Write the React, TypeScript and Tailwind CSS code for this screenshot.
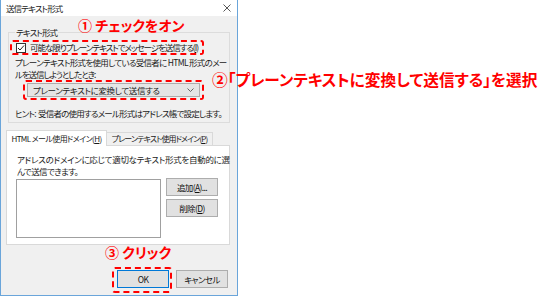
import React from "react"

const jp = "font-['Noto_Sans_CJK_JP',sans-serif] [font-feature-settings:'palt']"

function Btn({ children, primary }: { children: React.ReactNode; primary?: boolean }) {
  return (
    <div
      className={`flex items-center justify-center w-[52px] h-[18px] bg-[#e1e1e1] text-[8.5px] tracking-[-0.6px] text-[#111] border ${
        primary ? "border-[#0078d7]" : "border-[#adadad]"
      }`}
    >
      {children}
    </div>
  )
}

export default function App() {
  const callout = "absolute text-[#ff0000] font-bold whitespace-nowrap font-['Noto_Sans_CJK_JP',sans-serif]"

  return (
    <div className={`relative w-[554px] h-[296px] bg-white overflow-hidden ${jp}`}>
      <div className="flex flex-col w-[238px] h-[296px] border-x border-b border-[#6aa5da] text-[#1a1a1a] text-[8.5px]">
        {/* title bar */}
        <div className="flex items-center justify-between h-[16px] bg-white pl-[5px] pr-[6px]">
          <span className="leading-[12px] tracking-[-0.9px]">送信テキスト形式</span>
          <svg width="8" height="8" viewBox="0 0 8 8">
            <path d="M0.5 0.5 L7.5 7.5 M7.5 0.5 L0.5 7.5" stroke="#444" strokeWidth="0.9" />
          </svg>
        </div>

        <div className="flex flex-col flex-1 bg-[#f0f0f0]">
          {/* group */}
          <fieldset className="mx-[7px] mt-[10px] pl-[1px] pb-[3px] border border-[#dcdcdc]">
            <legend className="ml-[5px] px-[1px] leading-[12px] tracking-[-0.9px]">テキスト形式</legend>
            <div className="flex items-center w-[194px] h-[15px] mt-[2px] border-2 border-dashed border-[#ff0000] rounded-[3px]">
              <div className="flex items-center justify-center w-[10px] h-[10px] ml-[4px] bg-white border border-[#333]">
                <svg width="8" height="8" viewBox="0 0 8 8">
                  <path d="M1 4 L3 6 L7 1.5" fill="none" stroke="#222" strokeWidth="1" />
                </svg>
              </div>
              <span className="ml-[4px] leading-[11px] whitespace-nowrap tracking-[-1.05px]">
                可能な限りプレーンテキストでメッセージを送信する(<u>I</u>)
              </span>
            </div>
            <p className="ml-[5px] mt-[1px] leading-[12px] whitespace-nowrap">
              <span className="tracking-[-0.7px]">プレーンテキスト形式を使用している受信者に HTML 形式のメー</span>
              <br />
              <span className="tracking-[-1.1px]">ルを送信しようとしたとき:</span>
            </p>
            <div className="flex items-center justify-center w-[181px] h-[20px] ml-[13px] border-2 border-dashed border-[#ff0000] rounded-[3px]">
              <div className="flex items-center justify-between w-[173px] h-[14px] px-[5px] bg-[#e5e5e5] border border-[#adadad]">
                <span className="leading-[11px] tracking-[-0.35px]">プレーンテキストに変換して送信する</span>
                <svg width="7" height="4" viewBox="0 0 7 4">
                  <path d="M0.5 0.5 L3.5 3.5 L6.5 0.5" fill="none" stroke="#555" strokeWidth="0.9" />
                </svg>
              </div>
            </div>
            <p className="ml-[5px] mt-[7px] leading-[12px] whitespace-nowrap tracking-[-0.8px]">
              ヒント:&nbsp; 受信者の使用するメール形式はアドレス帳で設定します。
            </p>
          </fieldset>

          {/* tabs */}
          <div className="flex items-end ml-[5px] mt-[7px] whitespace-nowrap text-[8px]">
            <div className="relative z-10 flex items-center justify-center w-[101px] h-[16px] -mb-[1px] bg-white border border-b-0 border-[#d9d9d9] tracking-[-0.6px]">
              HTML メール使用ドメイン(<u>H</u>)
            </div>
            <div className="flex items-center justify-center w-[106px] h-[13px] border border-l-0 border-b-0 border-[#d9d9d9] tracking-[-0.9px]">
              プレーンテキスト使用ドメイン(<u>P</u>)
            </div>
          </div>
          <div className="ml-[5px] w-[224px] h-[100px] bg-white border border-[#d9d9d9] pt-[7px]">
            <p className="ml-[10px] leading-[12px] whitespace-nowrap">
              <span className="tracking-[-0.3px]">アドレスのドメインに応じて適切なテキスト形式を自動的に選</span>
              <br />
              <span className="tracking-[-0.6px]">んで送信できます。</span>
            </p>
            <div className="flex items-start mt-[2px] ml-[9px]">
              <div className="w-[145px] h-[59px] bg-white border border-[#a0a0a0]" />
              <div className="flex flex-col gap-[3px] ml-[5px] -mt-[1px]">
                <Btn>
                  追加(<u>A</u>)...
                </Btn>
                <Btn>
                  削除(<u>D</u>)
                </Btn>
              </div>
            </div>
          </div>

          {/* footer */}
          <div className="flex items-start justify-end gap-[4px] mt-auto mb-[2px] pr-[9px]">
            <div className="w-[60px] h-[26px] pl-[3px] pt-[1px] border-2 border-dashed border-[#ff0000] rounded-[3px]">
              <Btn primary>OK</Btn>
            </div>
            <div className="mt-[3px]">
              <Btn>キャンセル</Btn>
            </div>
          </div>
        </div>
      </div>

      {/* callouts */}
      <span className={`${callout} left-[78px] top-[17px] text-[14px] leading-[17px]`}>① チェックをオン</span>
      <span className={`${callout} left-[212px] top-[71px] text-[15.7px] leading-[18px]`}>
        ②「プレーンテキストに変換して送信する」を選択
      </span>
      <span className={`${callout} left-[105px] top-[244px] text-[14px] leading-[17px]`}>③ クリック</span>
    </div>
  )
}
